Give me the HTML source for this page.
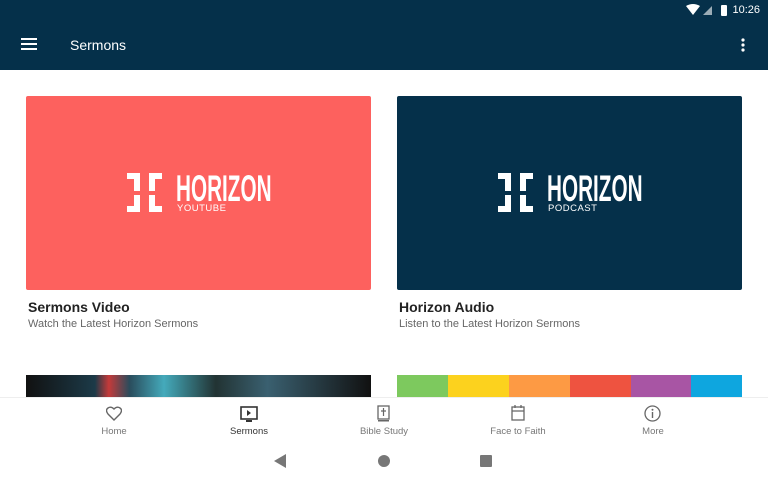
<!DOCTYPE html>
<html><head><style>
*{margin:0;padding:0;box-sizing:border-box}
body{width:768px;height:480px;overflow:hidden;background:#fff;font-family:"Liberation Sans",sans-serif;position:relative}
.hdr{position:absolute;left:0;top:0;width:768px;height:70px;background:#05304a;color:#fff}
.card{position:absolute;width:345px;height:194px;border-radius:2px}
.logo{position:absolute;left:101px;top:77px;width:160px;height:45px}
.hz{position:absolute;left:49px;top:-5px;font-size:37px;font-weight:bold;color:#fff;transform:scaleX(0.56);transform-origin:0 0;white-space:nowrap}
.sub{position:absolute;left:50px;top:30px;font-size:9.5px;color:#fff;letter-spacing:0.5px}
.t{position:absolute;font-size:14px;font-weight:bold;color:#222}
.s{position:absolute;font-size:11px;color:#666}
.nav{position:absolute;left:0;top:397px;width:768px;height:83px;background:#fff;border-top:1px solid #eee}
.ni{position:absolute;top:28px;width:100px;text-align:center;font-size:9.5px;color:#777}
</style></head><body>
<div class="hdr">
 <div style="position:absolute;right:8px;top:4px;font-size:11px">10:26</div>
 <svg style="position:absolute;left:686px;top:4px" width="46" height="12"><path d="M0 2 L7 11 L14 2 Q7 -2 0 2Z" fill="#fff"/><path d="M17 11 L26 2 V11Z" fill="#fff" opacity=".6"/><rect x="35" y="1" width="6" height="11" rx="1" fill="#fff"/></svg>
 <svg style="position:absolute;left:21px;top:38px" width="16" height="12"><rect y="0" width="16" height="2" fill="#fff"/><rect y="5" width="16" height="2" fill="#fff"/><rect y="10" width="16" height="2" fill="#fff"/></svg>
 <div style="position:absolute;left:70px;top:37px;font-size:14px">Sermons</div>
 <svg style="position:absolute;left:741px;top:38px" width="4" height="14"><circle cx="2" cy="2" r="1.6" fill="#fff"/><circle cx="2" cy="7" r="1.6" fill="#fff"/><circle cx="2" cy="12" r="1.6" fill="#fff"/></svg>
</div>

<div class="card" style="left:26px;top:96px;background:#fd615e">
 <div class="logo"><svg width="36" height="40" viewBox="0 0 36 40"><g fill="#fff"><path d="M0 0 H13 V18 H7 V6 H0Z"/><path d="M35 0 H22 V18 H28 V6 H35Z"/><path d="M0 39 H13 V22 H7 V33 H0Z"/><path d="M35 39 H22 V22 H28 V33 H35Z"/></g></svg><div class="hz">HORIZON</div><div class="sub">YOUTUBE</div></div>
</div>
<div class="card" style="left:397px;top:96px;background:#05304a">
 <div class="logo"><svg width="36" height="40" viewBox="0 0 36 40"><g fill="#fff"><path d="M0 0 H13 V18 H7 V6 H0Z"/><path d="M35 0 H22 V18 H28 V6 H35Z"/><path d="M0 39 H13 V22 H7 V33 H0Z"/><path d="M35 39 H22 V22 H28 V33 H35Z"/></g></svg><div class="hz">HORIZON</div><div class="sub">PODCAST</div></div>
</div>
<div class="t" style="left:28px;top:299px">Sermons Video</div>
<div class="s" style="left:28px;top:318px">Watch the Latest Horizon Sermons</div>
<div class="t" style="left:399px;top:299px">Horizon Audio</div>
<div class="s" style="left:399px;top:318px">Listen to the Latest Horizon Sermons</div>

<div style="position:absolute;left:26px;top:375px;width:345px;height:30px;background:linear-gradient(90deg,#111 0%,#1c3a48 20%,#c43a3a 24%,#2a4c5c 30%,#4ab 40%,#233 55%,#3a6070 70%,#111 100%)"></div>
<div style="position:absolute;left:397px;top:375px;width:345px;height:30px;display:flex">
 <div style="width:51px;background:#7dc95e"></div><div style="width:61px;background:#fcd21e"></div><div style="width:61px;background:#fd9a44"></div><div style="width:61px;background:#ee5340"></div><div style="width:60px;background:#a855a4"></div><div style="width:51px;background:#0ea6df"></div>
</div>

<div class="nav">
 <svg style="position:absolute;left:106px;top:8px" width="16" height="15" viewBox="0 0 16 15"><path d="M8 14 L2 8 Q-1 4 2 2 Q5 0 8 3 Q11 0 14 2 Q17 4 14 8Z" fill="none" stroke="#666" stroke-width="1.4"/></svg>
 <div class="ni" style="left:64px">Home</div>
 <svg style="position:absolute;left:240px;top:8px" width="18" height="16"><rect x="1" y="1" width="16" height="12" fill="none" stroke="#333" stroke-width="1.6"/><path d="M7 4 L11 7 L7 10Z" fill="#333"/><rect x="6" y="14" width="6" height="2" fill="#333"/></svg>
 <div class="ni" style="left:199px;color:#333">Sermons</div>
 <svg style="position:absolute;left:377px;top:7px" width="13" height="17"><rect x="1" y="1" width="11" height="13" fill="none" stroke="#666" stroke-width="1.3"/><path d="M6.5 3 V11 M4 6 H9" stroke="#666" stroke-width="1.2"/><rect x="1" y="15" width="11" height="1.5" fill="#666"/></svg>
 <div class="ni" style="left:334px">Bible Study</div>
 <svg style="position:absolute;left:511px;top:6px" width="14" height="17"><rect x="1" y="3" width="12" height="13" fill="none" stroke="#666" stroke-width="1.3"/><path d="M1 7 H13 M4 1 V4 M10 1 V4" stroke="#666" stroke-width="1.3"/></svg>
 <div class="ni" style="left:468px">Face to Faith</div>
 <svg style="position:absolute;left:644px;top:7px" width="17" height="17"><circle cx="8.5" cy="8.5" r="7.5" fill="none" stroke="#666" stroke-width="1.3"/><path d="M8.5 7 V13" stroke="#666" stroke-width="1.4"/><circle cx="8.5" cy="4.8" r="1" fill="#666"/></svg>
 <div class="ni" style="left:603px">More</div>
 <svg style="position:absolute;left:274px;top:56px" width="220" height="14"><path d="M0 7 L12 0 V14Z" fill="#777"/><circle cx="110" cy="7" r="6" fill="#777"/><rect x="206" y="1" width="12" height="12" rx="1" fill="#777"/></svg>
</div>
</body></html>
